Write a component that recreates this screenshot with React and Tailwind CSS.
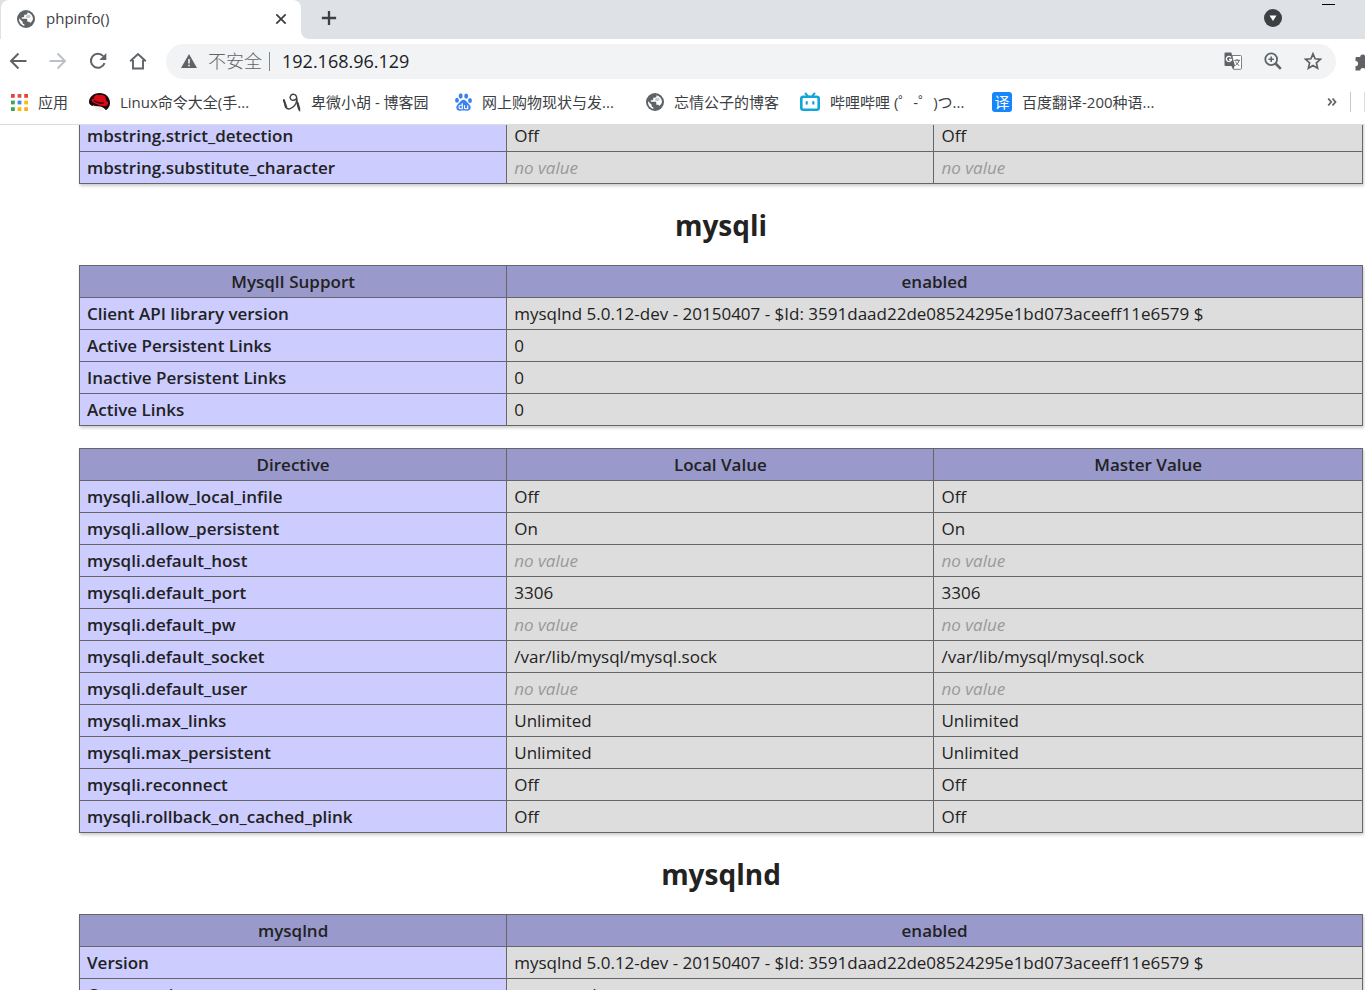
import React from 'react';

const NONE = 'no value';

function GlobeIcon({ className }) {
  return (
    <svg viewBox="0 0 18 18" className={className} aria-hidden="true">
      <circle cx="9" cy="9" r="9" fill="#5f6368" />
      <path
        d="M10.500 2.200v.9c0 1-.8 1.700-1.700 1.700H7.200v1.400c0 .6-.5 1-1 1H4.800v1.600h4.500c.6 0 1 .5 1 1v2h1.100c.9 0 1.600.5 1.900 1.300A7 7 0 0 0 16 9c0-3.100-2.300-6-5.500-6.800z"
        fill="#fff"
      />
      <path d="M2 8.200l3.600 3.500v.7c0 1 .8 1.700 1.700 1.700v1.800C4.400 15.300 2 12.500 2 9z" fill="#fff" />
      <path d="M10.300 4.800h2.200l1.300 1.600-1.500 1.500H9.800L8.700 6.800z" fill="#5f6368" opacity=".35" />
    </svg>
  );
}

function AppsIcon() {
  const dots = [
    [0, 0, '#ea4335'], [7, 0, '#e0524a'], [14, 0, '#ea4335'],
    [0, 7, '#34a853'], [7, 7, '#4285f4'], [14, 7, '#fbbc05'],
    [0, 14, '#34a853'], [7, 14, '#fbbc05'], [14, 14, '#f2b225'],
  ];
  return (
    <svg viewBox="0 0 18 18" className="size-[17px]" aria-hidden="true">
      {dots.map(([x, y, c]) => (
        <rect key={`${x}-${y}`} x={x} y={y} width="4" height="4" fill={c} />
      ))}
    </svg>
  );
}

function HatIcon() {
  return (
    <svg viewBox="0 0 21 18" className="h-[18px] w-[21px]" aria-hidden="true">
      <path d="M0 9C0 4 4.500 0 10.500 0S21 4 21 10c0 3-1.500 5.500-4 7.300-1.500-2-3-3-5-3.500L4 13C1.500 12.500 0 11 0 9z" fill="#1a0507" />
      <path d="M5.300 3.800C6 1.800 8.300 2 9.800 2.200c1.600-.4 4.700-.7 5.900.9.900 1.300 1.200 3.300 1.500 4.700 1.900 1 2.600 2.700 1.400 4-1.500 1.700-5 1.400-8 .5C7 11.300 2.200 9 2.400 7.100c.2-.8 1.200-1.200 2.300-1.200z" fill="#dc0a17" />
      <path d="M5 6.500c1.500 2 6 3.800 10 2.700l.2 1.100C11 11.500 6 9.500 4.600 7.500z" fill="#1a0507" />
      <path d="M3.800 12.300c2 .5 5 1.700 8.500 1.500.6 1.200 1.400 2.500 3 3.500-2.300.9-5.600.8-7.300-.6-.8-.7-1-1.200-1.500-1.500-1.200-.6-2.200-1.500-2.700-2.900z" fill="#f9ebe6" />
    </svg>
  );
}

function CnblogsIcon() {
  return (
    <svg viewBox="0 0 18 19" className="h-[19px] w-[18px]" fill="none" stroke="#3f4043" aria-hidden="true">
      <path d="M.6 6.300l2 8c1.300 1.500 2.600 2 4 1.600 3.600-1.200 6.700-4.200 7.200-9.100C14.200 3 12.200 1 9.900 1.300 7.300 1.700 6.300 4.800 8 6.500c1.700 1.500 4.300.8 5.500-1" strokeWidth="1.400" />
      <path d="M.7 6.500l2.800 8" strokeWidth="2" />
      <path d="M13.500 6.500l3.200 11.800" strokeWidth="1.400" />
      <path d="M14.300 9.500l2 7" strokeWidth="2.400" />
    </svg>
  );
}

function BaiduIcon() {
  return (
    <svg viewBox="0 0 17 18" className="h-[18px] w-[17px]" fill="#3a82f0" aria-hidden="true">
      <ellipse cx="5.700" cy="3" rx="2" ry="2.700" />
      <ellipse cx="11.200" cy="3.100" rx="2" ry="2.700" />
      <ellipse cx="2" cy="7.200" rx="1.900" ry="2.500" />
      <ellipse cx="15" cy="7.400" rx="1.900" ry="2.500" />
      <path d="M8.500 6.700c2 0 2.900 1.600 3.900 2.800 1.300 1.500 3.500 2.700 3.300 5.300-.2 2.300-2 3.100-4 2.900-1.100-.1-2.100-.3-3.200-.3s-2.100.2-3.200.3c-2 .2-3.800-.6-4-2.900-.2-2.600 2-3.800 3.300-5.300 1-1.200 1.900-2.800 3.900-2.800z" />
      <path d="M7.300 10.300v5.400H5.600a1.700 1.700 0 0 1 0-3.400h1.700M9.500 12.200v2.500q0 1 1 1h2.200v-3.500" fill="none" stroke="#fff" strokeWidth="1.100" />
    </svg>
  );
}

function BilibiliIcon() {
  return (
    <svg viewBox="0 0 20 20" className="size-5" fill="none" stroke="#12a5d8" strokeLinecap="round" aria-hidden="true">
      <path d="M5.500 1.500l2.300 2.700M14.500 1.500l-2.300 2.700" strokeWidth="2" />
      <rect x="1.300" y="4.800" width="17.400" height="13" rx="2" strokeWidth="2.600" />
      <path d="M6.700 10v1.700M13.300 10v1.700" strokeWidth="2.200" />
    </svg>
  );
}

function TranslateBadge() {
  return (
    <span className="flex size-5 items-center justify-center rounded-[3px] bg-[#1785fb] text-[15px] leading-5 text-white">
      译
    </span>
  );
}

function GoogleTranslateIcon() {
  return (
    <svg viewBox="0 0 18 18" className="size-[18px]" aria-hidden="true">
      <path d="M8 3.500h8.500q1 0 1 1v11.800q0 1-1 1H9.500L8 14z" fill="#fff" stroke="#7b7e82" />
      <path d="M.5 1.500q0-1 1-1h5.800L11 14H1.500q-1 0-1-1z" fill="#5f6368" />
      <path d="M10.500 14l-1 3.300L7.600 14z" fill="#5f6368" />
      <path d="M7 5.300A2.600 2.600 0 1 0 7.500 7.500H5" fill="none" stroke="#fff" strokeWidth="1.300" />
      <path d="M10.300 8.300h5.700M13 7v1.300M15 8.500c-.5 2.200-2 3.800-3.700 5M11.700 9.800c.7 1.500 2 2.800 3.600 3.700" fill="none" stroke="#5f6368" />
    </svg>
  );
}

function Stroke({ children, color = '#5f6368', className = 'size-[18px]' }) {
  return (
    <svg viewBox="0 0 18 18" className={className} fill="none" stroke={color} strokeWidth="2" aria-hidden="true">
      {children}
    </svg>
  );
}

const bookmarks = [
  { label: '应用', icon: <AppsIcon />, width: 'w-[79px]', slot: 'w-[18px]' },
  { label: 'Linux命令大全(手...', icon: <HatIcon />, width: 'w-[194px]', slot: 'w-[21px]' },
  { label: '卑微小胡 - 博客园', icon: <CnblogsIcon />, width: 'w-[171px]', slot: 'w-[18px]' },
  { label: '网上购物现状与发...', icon: <BaiduIcon />, width: 'w-[192px]', slot: 'w-[18px]' },
  { label: '忘情公子的博客', icon: <GlobeIcon className="size-[18px]" />, width: 'w-[154px]', slot: 'w-[18px]' },
  { label: '哔哩哔哩 (゜-゜)つ...', icon: <BilibiliIcon />, width: 'w-[192px]', slot: 'w-5' },
  { label: '百度翻译-200种语...', icon: <TranslateBadge />, width: 'w-[190px]', slot: 'w-5' },
];

function TabStrip() {
  return (
    <header className="flex h-[39px] shrink-0 items-stretch bg-[#dee1e6] pl-px">
      <div className="flex w-[300px] items-center rounded-t-lg bg-white pr-3 pb-[2px] pl-4">
        <GlobeIcon className="size-[18px]" />
        <span className="ml-[11px] flex-1 text-[15px] text-[#3c4043]">phpinfo()</span>
        <button aria-label="Close tab" className="flex size-4 items-center justify-center">
          <Stroke className="size-[14px]" color="#3c4043"><path d="M3 3l12 12M15 3L3 15" strokeWidth="2.300" /></Stroke>
        </button>
      </div>
      <svg viewBox="0 0 8 8" className="size-2 self-end" aria-hidden="true">
        <path d="M0 0a8 8 0 0 0 8 8H0z" fill="#fff" />
      </svg>
      <button aria-label="New tab" className="ml-2 flex w-6 items-center justify-center pb-1">
        <Stroke className="size-4" color="#3c4043"><path d="M9 1v16M1 9h16" strokeWidth="2.600" /></Stroke>
      </button>
      <div className="flex-1" />
      <button aria-label="Search tabs" className="mr-10 flex items-center pb-1">
        <svg viewBox="0 0 18 18" className="size-[18px]" aria-hidden="true">
          <circle cx="9" cy="9" r="9" fill="#3c4043" />
          <path d="M5.500 6.500h7L9 12z" fill="#fff" />
        </svg>
      </button>
      <button aria-label="Minimize" className="mr-[30px] flex w-[13px] items-start pt-1">
        <span className="h-px w-full bg-black" />
      </button>
    </header>
  );
}

function Toolbar() {
  return (
    <div className="flex h-[45px] shrink-0 items-center bg-white pl-[9px]">
      <nav className="flex gap-[22px] pb-px">
        <button aria-label="Back"><Stroke><path d="M17.500 9H2M9.500 1.500L2 9l7.500 7.500" /></Stroke></button>
        <button aria-label="Forward"><Stroke color="#bdc1c6"><path d="M.5 9H16M8.500 1.500L16 9l-7.500 7.500" /></Stroke></button>
        <button aria-label="Reload">
          <Stroke>
            <path d="M15.500 11.200A7 7 0 1 1 14.200 4.200" />
            <path d="M17.300 1v7h-7z" fill="#5f6368" stroke="none" />
          </Stroke>
        </button>
        <button aria-label="Home"><Stroke><path d="M1.200 9.300L9 2l7.800 7.300M4 8v8.500h10V8" strokeWidth="1.900" /></Stroke></button>
      </nav>
      <div className="ml-[19px] flex h-[35px] flex-1 items-center rounded-full bg-[#f1f3f4] pr-[14px] pb-px pl-[15px]">
        <svg viewBox="0 0 16 14" className="h-[14px] w-4" aria-hidden="true">
          <path d="M8 0l8 14H0z" fill="#5f6368" />
          <path d="M8 5v4.500M8 10.700v1.600" stroke="#f1f3f4" strokeWidth="1.600" />
        </svg>
        <label htmlFor="address" className="ml-[11px] text-[18px] leading-6 font-light text-[#5f6368]">不安全</label>
        <span className="ml-[7px] h-[19px] w-px bg-[#80868b]" />
        <input id="address" defaultValue="192.168.96.129" className="ml-3 h-6 min-w-0 flex-1 bg-transparent pb-px text-[18px] leading-6 text-[#202124] outline-none" />
        <div className="flex gap-[22px]">
          <button aria-label="Translate page"><GoogleTranslateIcon /></button>
          <button aria-label="Zoom">
            <Stroke><circle cx="7.200" cy="7.200" r="5.900" strokeWidth="1.800" /><path d="M11.500 11.500l5.300 5.300" strokeWidth="2.600" /><path d="M7.200 4.500v5.400M4.500 7.200h5.400" strokeWidth="1.500" /></Stroke>
          </button>
          <button aria-label="Bookmark">
            <Stroke><path d="M9 1.800l2.100 5 5.400.5-4.100 3.600 1.200 5.300L9 13.400l-4.600 2.800 1.200-5.300-4.100-3.600 5.400-.5z" strokeWidth="1.700" /></Stroke>
          </button>
        </div>
      </div>
      <button aria-label="Extensions" className="ml-[19px] w-[10px] overflow-hidden">
        <svg viewBox="0 0 18 18" className="size-[18px] max-w-none" aria-hidden="true">
          <path d="M1.500 4h3.700a2.500 2.500 0 1 1 5 0h4.300v4.200a2.500 2.500 0 0 1 0 5v4.300h-4a2.600 2.600 0 0 0-5.200 0H.5v-4.300a2.600 2.600 0 0 0 0-5.200V5q0-1 1-1z" fill="#5f6368" />
        </svg>
      </button>
    </div>
  );
}

function BookmarksBar() {
  return (
    <nav className="flex h-[41px] shrink-0 items-center overflow-hidden border-b border-[#dadce0] bg-white pb-1 pl-[10px] text-[15px] text-[#3c4043]">
      {bookmarks.map((b) => (
        <a key={b.label} href="#" className={`flex shrink-0 items-center gap-[10px] whitespace-nowrap ${b.width}`}>
          <span className={`flex shrink-0 justify-center ${b.slot}`}>{b.icon}</span>
          {b.label}
        </a>
      ))}
      <div className="flex-1" />
      <button aria-label="More bookmarks" className="mr-[13px]">
        <svg viewBox="0 0 10 10" className="size-[10px]" fill="none" stroke="#5f6368" strokeWidth="1.800" aria-hidden="true">
          <path d="M1.200 1.500L4.200 5l-3 3.500M5.500 1.500l3 3.500-3 3.500" />
        </svg>
      </button>
      <span className="mr-[13px] h-5 w-px bg-[#c4c7cb]" />
      <span className="h-5 w-px bg-[#dadce0]" />
    </nav>
  );
}

function Value({ text, span }) {
  return (
    <td colSpan={span} className="border border-[#666] bg-[#ddd] px-[7px]">
      {text === NONE ? <i className="text-[#999]">{text}</i> : text}
    </td>
  );
}

function InfoTable({ head, rows, columns = 3 }) {
  return (
    <table className="w-full table-fixed border-collapse text-[17px] leading-6 text-[#222] shadow-[1px_2px_3px_#ccc]">
      <colgroup>
        <col className="w-[33.3%]" />
        <col className="w-[33.3%]" />
        <col />
      </colgroup>
      {head && (
        <thead>
          <tr className="h-8 bg-[#9999cc]">
            {head.map((h, i) => (
              <th key={h} colSpan={columns === 2 && i === 1 ? 2 : 1} className="border border-[#666] px-[7px] font-semibold">
                {h}
              </th>
            ))}
          </tr>
        </thead>
      )}
      <tbody>
        {rows.map(([name, ...values]) => (
          <tr key={name} className="h-8">
            <th scope="row" className="border border-[#666] bg-[#ccccff] px-[7px] text-left font-semibold">{name}</th>
            {values.map((v, i) => (
              <Value key={i} text={v} span={columns === 2 ? 2 : 1} />
            ))}
          </tr>
        ))}
      </tbody>
    </table>
  );
}

function SectionTitle({ children }) {
  return <h2 className="flex h-[81px] items-center justify-center pt-px text-[28px] leading-9 font-bold text-[#222]">{children}</h2>;
}

const CLIENT = 'mysqlnd 5.0.12-dev - 20150407 - $Id: 3591daad22de08524295e1bd073aceeff11e6579 $';

const directives = [
  ['mysqli.allow_local_infile', 'Off', 'Off'],
  ['mysqli.allow_persistent', 'On', 'On'],
  ['mysqli.default_host', NONE, NONE],
  ['mysqli.default_port', '3306', '3306'],
  ['mysqli.default_pw', NONE, NONE],
  ['mysqli.default_socket', '/var/lib/mysql/mysql.sock', '/var/lib/mysql/mysql.sock'],
  ['mysqli.default_user', NONE, NONE],
  ['mysqli.max_links', 'Unlimited', 'Unlimited'],
  ['mysqli.max_persistent', 'Unlimited', 'Unlimited'],
  ['mysqli.reconnect', 'Off', 'Off'],
  ['mysqli.rollback_on_cached_plink', 'Off', 'Off'],
];

export default function App() {
  return (
    <div className="flex h-screen flex-col overflow-hidden bg-white font-['Open_Sans','Noto_Sans_CJK_SC',sans-serif]">
      <TabStrip />
      <Toolbar />
      <BookmarksBar />
      <main className="min-h-0 flex-1 overflow-hidden pr-[2px] pl-[79px]">
        <div className="-mt-[6px]">
          <InfoTable
            rows={[
              ['mbstring.strict_detection', 'Off', 'Off'],
              ['mbstring.substitute_character', NONE, NONE],
            ]}
          />
          <SectionTitle>mysqli</SectionTitle>
          <InfoTable
            columns={2}
            head={['MysqlI Support', 'enabled']}
            rows={[
              ['Client API library version', CLIENT],
              ['Active Persistent Links', '0'],
              ['Inactive Persistent Links', '0'],
              ['Active Links', '0'],
            ]}
          />
          <div className="h-[22px]" />
          <InfoTable head={['Directive', 'Local Value', 'Master Value']} rows={directives} />
          <SectionTitle>mysqlnd</SectionTitle>
          <InfoTable
            columns={2}
            head={['mysqlnd', 'enabled']}
            rows={[
              ['Version', CLIENT],
              ['Compression', 'supported'],
            ]}
          />
        </div>
      </main>
    </div>
  );
}
